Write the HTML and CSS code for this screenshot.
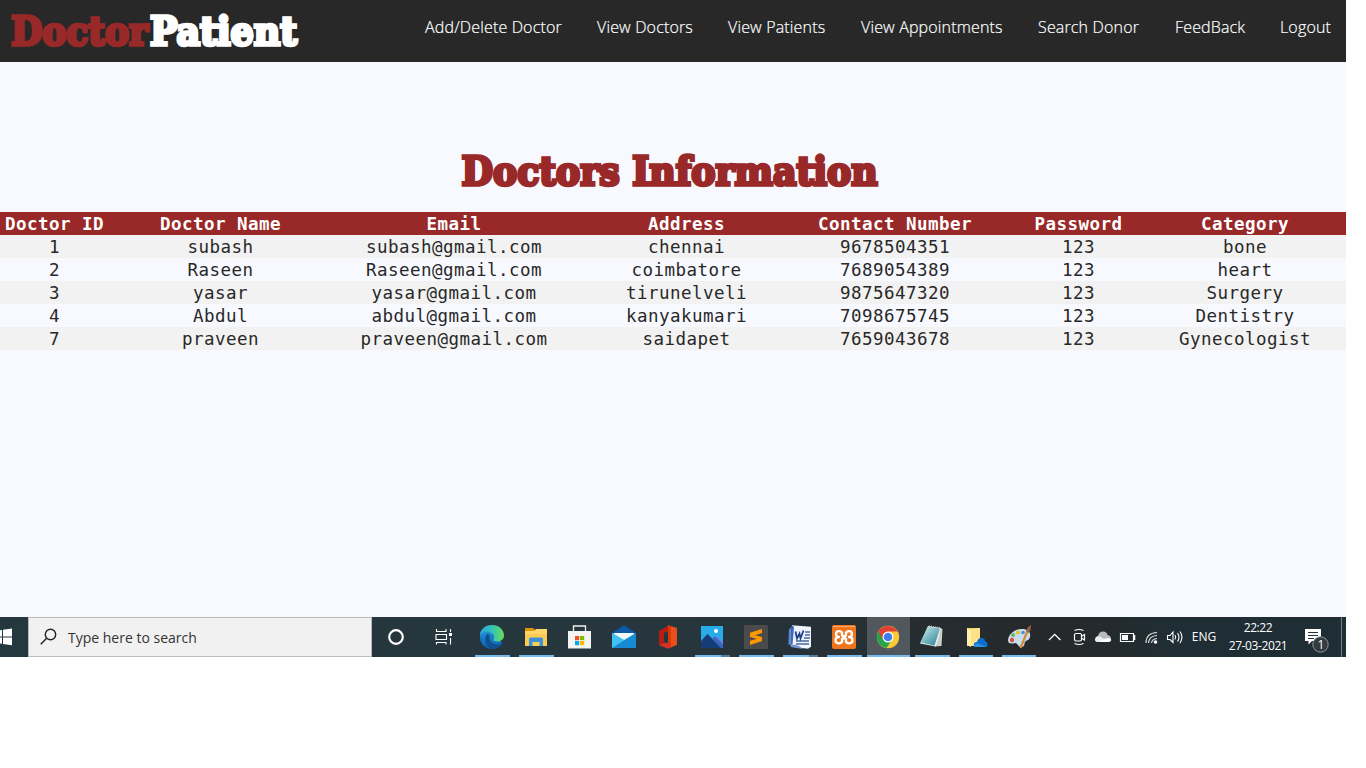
FILE: index.html
```html
<!DOCTYPE html>
<html lang="en">
<head>
<meta charset="utf-8">
<title>Doctors Information</title>
<link rel="stylesheet" href="styles.css">
</head>
<body>
<div class="screen">
  <header class="topbar">
    <svg class="brand" width="320" height="62" role="img" aria-label="DoctorPatient">
      <text class="slab red" x="11" y="44.500" textLength="137" lengthAdjust="spacingAndGlyphs">Doctor</text>
      <text class="slab white" x="150" y="44.500" textLength="147" lengthAdjust="spacingAndGlyphs">Patient</text>
    </svg>
    <nav class="nav">
      <a class="w1">Add/Delete Doctor</a><a class="w2">View Doctors</a><a class="w3">View Patients</a><a class="w4">View Appointments</a><a class="w5">Search Donor</a><a class="w6">FeedBack</a><a class="w7">Logout</a>
    </nav>
  </header>
  <main class="content">
    <h1 class="title">
      <svg width="480" height="60"><text class="slab red" x="4.500" y="38" textLength="416" lengthAdjust="spacingAndGlyphs">Doctors Information</text></svg>
    </h1>
    <table class="doctors">
      <colgroup><col class="c1"><col class="c2"><col class="c3"><col class="c4"><col class="c5"><col class="c6"><col class="c7"></colgroup>
      <thead><tr><th>Doctor ID</th><th>Doctor Name</th><th>Email</th><th>Address</th><th>Contact Number</th><th>Password</th><th>Category</th></tr></thead>
      <tbody>
        <tr><td>1</td><td>subash</td><td>subash@gmail.com</td><td>chennai</td><td>9678504351</td><td>123</td><td>bone</td></tr>
        <tr><td>2</td><td>Raseen</td><td>Raseen@gmail.com</td><td>coimbatore</td><td>7689054389</td><td>123</td><td>heart</td></tr>
        <tr><td>3</td><td>yasar</td><td>yasar@gmail.com</td><td>tirunelveli</td><td>9875647320</td><td>123</td><td>Surgery</td></tr>
        <tr><td>4</td><td>Abdul</td><td>abdul@gmail.com</td><td>kanyakumari</td><td>7098675745</td><td>123</td><td>Dentistry</td></tr>
        <tr><td>7</td><td>praveen</td><td>praveen@gmail.com</td><td>saidapet</td><td>7659043678</td><td>123</td><td>Gynecologist</td></tr>
      </tbody>
    </table>
  </main>
  <footer class="taskbar">
    <svg class="start" width="28" height="40"><g fill="#fff"><path d="M0 13.3L2 13v6.400H0zM3 12.800l9-1.200v7.800H3zM0 20.400h2v6.400l-2-.3zM3 20.400h9v7.900l-9-1.300z"/></g></svg>
    <div class="search">
      <svg width="39" height="38"><g fill="none" stroke="#222" stroke-width="1.400"><circle cx="21.500" cy="16.500" r="5.200"/><path d="M17.700 20.300l-6 6"/></g></svg>
      <span>Type here to search</span>
    </div>
    <svg class="wide" width="48" height="40"><circle cx="24" cy="20" r="6.800" fill="none" stroke="#fff" stroke-width="2.200"/></svg>
    <svg class="wide" width="50" height="40"><g fill="none" stroke="#fff" stroke-width="1.100"><path d="M16.500 12v2.500h9.500V12M16.500 27.500V25.500h9.500v2M16 17.500h10.500v5H16zM30.500 12v3M30.500 21v6.500"/></g><path d="M29 16h3v3h-3z" fill="#fff"/></svg>

    <div class="app open"><svg width="44" height="40">
      <defs><linearGradient id="eg" x1="0" x2="1"><stop offset="0" stop-color="#2ba6e0"/><stop offset=".5" stop-color="#35c1b9"/><stop offset="1" stop-color="#67dd58"/></linearGradient><linearGradient id="eb" x1="0" x2="0" y2="1" y1="0"><stop offset="0" stop-color="#239be0"/><stop offset="1" stop-color="#0b59a8"/></linearGradient></defs>
      <path d="M10 18C10 12 16 10 20 13l4 6 8.500 7C30 30 26 32 22 32c-7 0-12-5-12-12z" fill="url(#eb)"/>
      <path d="M10 18C11 11 16 8 22 8c7 0 12 5 12 10.500 0 4-3.500 6-7 6-3 0-4-1-3.500-2 1.500-2 .5-6-4-7.500-4-1-8 .5-9.500 3z" fill="url(#eg)"/>
      <path d="M17 17c-3 4-2 11 4 14.900C28 32 31 29 32.500 26c-4 3-9 2-11.500-1-2-2.500-2-5-1-7z" fill="#124f8f"/></svg></div>
    <div class="app open"><svg width="44" height="40">
      <path d="M11 11h8l2 2v4H11z" fill="#dc9704"/><path d="M11 14h9l2-2h11v17H11z" fill="#ffd668"/><path d="M11 17h22v12H11z" fill="#fdca52"/><path d="M15 29v-7q0-1.500 1.500-1.500h11q1.500 0 1.500 1.500v7h-3.500v-4h-7v4z" fill="#3c92d4"/></svg></div>
    <div class="app"><svg width="44" height="40">
      <path d="M15.500 15V9h12v6" fill="none" stroke="#f1f1f1" stroke-width="1.300"/><path d="M10 14h23v17.500H10z" fill="#f4f4f4"/><path d="M17 19h4.200v4.200H17z" fill="#f25022"/><path d="M22 19h4.200v4.200H22z" fill="#7fba00"/><path d="M17 24h4.200v4.200H17z" fill="#00a4ef"/><path d="M22 24h4.200v4.200H22z" fill="#ffb900"/></svg></div>
    <div class="app"><svg width="44" height="40">
      <path d="M10 16l12-7.700L34 16v6H10z" fill="#0a5aa8"/><path d="M12 16h20v2l-10 6-10-6z" fill="#f7f9fb"/><path d="M10 16l12 7 12-7v15H10z" fill="#31b1ef"/><path d="M10 31l24-15v15z" fill="#168bd4"/><path d="M10 16l12 7-12 8z" fill="#40c3f2"/></svg></div>
    <div class="app"><svg width="44" height="40">
      <path d="M13 14l10-5.700v5.700l-5 2v9l-5 3z" fill="#b71d14"/><path d="M22 8.300l9 2.700v17l-9 3.500-9-3.500 11-1V13l-2-1z" fill="#e8501b"/><path d="M22 8.300l3 1V28l-3-1V13z" fill="#d83b01"/><path d="M13 28l5-2.500 7 1v4l-3 1z" fill="#d92f23"/></svg></div>
    <div class="app open multi"><svg width="44" height="40">
      <path d="M11 9h22v22H11z" fill="#26ace9"/><path d="M20 24l6-5 7 5v7H20z" fill="#6e7de0"/><path d="M11 24l6.500-7L32 31H11z" fill="#153c76"/><path d="M22 22l3-2.500 8 8V31h-2z" fill="#3765c4"/><circle cx="26" cy="14" r="2" fill="#fff"/></svg></div>
    <div class="app open"><svg width="44" height="40">
      <rect x="10" y="8" width="24" height="24" rx="1.500" fill="#4b4b4b"/><path d="M16 15.700L28 12v4l-7 2.200 7 1.700v4L16 28v-4.200l7-2.100-7-1.700z" fill="#ff9800"/></svg></div>
    <div class="app open multi"><svg width="44" height="40">
      <path d="M14 8.300l19 1.500v20l-3 2-17-2z" fill="#f0f4fb"/><path d="M11 12l4-3.500 1 2-1.500 17-4.500.5z" fill="#3d68b5"/><path d="M12 12v15" stroke="#8bacdf"/><path d="M27 15h5M27 18h5M26 21h6M18 24h13M18 27h13" stroke="#4a65a5" stroke-width="1.300"/><path d="M16 14l10-1v9l-10 1z" fill="#e5edfa"/><path d="M17.500 14.500l1.500 7 2.500-5 1 5 3-8" fill="none" stroke="#193c84" stroke-width="1.700"/><path d="M12 28c5-1 9 0 13 4l-12-2z" fill="#6f96d6"/></svg></div>
    <div class="app open"><svg width="44" height="40">
      <rect x="10" y="8" width="24" height="24" rx="2" fill="#f0761d"/><path d="M11 9.500h22" stroke="#fba969"/><path d="M20.500 16.500C19 13 14 13.500 14 17c0 2 1.500 3 3 3-2 0-3.500 1.200-3.500 3.300 0 3.700 5.500 4 7 .7M23.500 16.500C25 13 30 13.500 30 17c0 2-1.500 3-3 3 2 0 3.500 1.200 3.500 3.300 0 3.700-5.500 4-7 .7M20 16v2.500q2 1.500 4 0V16M20 24.500V22q2-1.500 4 0v2.500" fill="none" stroke="#fff" stroke-width="2.300" stroke-linejoin="round"/></svg></div>
    <div class="app open active"><svg width="44" height="40">
      <circle cx="22" cy="20" r="11.200" fill="#fbc934"/><path d="M22 20L12.300 14.400A11.200 11.200 0 0 0 20.500 31.100L26.500 22z" fill="#27a34b"/><path d="M12.300 14.400A11.200 11.200 0 0 1 31.700 14.600H22l-5 8z" fill="#e23f35"/><circle cx="22" cy="20" r="5.500" fill="#fff"/><circle cx="22" cy="20" r="4.300" fill="#3f7de8"/></svg></div>
    <div class="app open"><svg width="44" height="40">
      <defs><linearGradient id="np" x1="0" y1="0" x2="1" y2="1"><stop offset="0" stop-color="#d3eff2"/><stop offset=".5" stop-color="#75b5c0"/><stop offset="1" stop-color="#327b8e"/></linearGradient></defs>
      <path d="M30 11l2.500 1-1 17-7 .5z" fill="#c9cfcb"/><path d="M18 9l13 2-5 18.500-16-3z" fill="#e8f0ef"/><path d="M18 10l12 1.500-5.500 17L10.500 25.500z" fill="url(#np)"/><path d="M19 9l12 2" stroke="#b2bab9" stroke-width="1.500" stroke-dasharray="1 1"/></svg></div>
    <div class="app open narrow"><svg width="44" height="40">
      <path d="M13 11h13v18H13z" fill="#f6c94f"/><path d="M15 12l11-1v17l-9 1z" fill="#ffe18a"/><path d="M13 11l4 3v16l-4-2z" fill="#fff0aa"/><path d="M20 30q-1-5 3-5 1-4 4-4 4 0 4 3 3 1 2.500 4 0 2-2 2z" fill="#0a6dcf"/><path d="M20 30q0-3 3-4l10 4z" fill="#2791e6"/></svg></div>
    <div class="app open narrow last"><svg width="44" height="40">
      <path d="M10 23c1-7 7-11 14-11 6 0 9 3 8 8-1 4-4 3-5 5s0 5-4 5c-3 0-3-4-6-4-4 1-7 1-7-3z" fill="#c8ddeb"/><circle cx="15" cy="18" r="2" fill="#69b65e"/><circle cx="20" cy="15.500" r="2" fill="#e4bd37"/><circle cx="25" cy="15.500" r="1.800" fill="#4394d0"/><circle cx="14" cy="23" r="2.200" fill="#db4f3c"/><path d="M29.500 14l-7 17" stroke="#d78836" stroke-width="2.200"/><path d="M28 14l2-4 3-2-.5 5-2 3z" fill="#9b6042"/></svg></div>

    <svg class="tray" width="25" height="40"><path d="M7 23l5.700-5.700 5.700 5.700" fill="none" stroke="#fff" stroke-width="1.300"/></svg>
    <svg class="tray" width="24" height="40"><g fill="none" stroke="#fff" stroke-width="1.200"><rect x="7.500" y="16.500" width="7" height="7.500" rx="1.500"/><path d="M15 19l2.500-1.500v5.500L15 21.500M7.500 13.500q4.500-2 9 0M7.500 26.500q4.500 2 9 0"/></g></svg>
    <svg class="tray" width="24" height="40"><path d="M5 24q-2-4 2-5 1-4.500 5-4.500 4 0 4.500 3.500 3.500.5 3.500 4 0 2-2 2z" fill="#b9bcbe"/><path d="M6.500 25q-3-.5-2.500-3 1-3.500 5-2.500l9 5.500z" fill="#eee"/><path d="M8 25l8-4q5 0 4 3l-2 1z" fill="#fff"/></svg>
    <svg class="tray" width="24" height="40"><path d="M5.500 16.500h13v8h-13z" fill="none" stroke="#fff" stroke-width="1.200"/><path d="M7 18h6v5H7zM19 18h1.300v5H19z" fill="#fff"/></svg>
    <svg class="tray" width="24" height="40"><g fill="none" stroke="#ddd" stroke-width="1.100"><path d="M7 26Q7 16 18 15.500M9.500 26Q10 19 18 18.500M12.500 26Q13 22 18 21.500"/></g><circle cx="16.500" cy="25" r="1.800" fill="#fff"/></svg>
    <svg class="tray" width="24" height="40"><g fill="none" stroke="#fff" stroke-width="1.100"><path d="M4.500 18.500H7l3-3.500v10.500L7 22.500H4.500zM12 18q1.500 2.200 0 4.500M14.500 16q3 4.200 0 8.500M17 14.500q4 5.700 0 11.500"/></g></svg>
    <span class="lang">ENG</span>
    <div class="clock"><span>22:22</span><span class="date">27-03-2021</span></div>
    <svg class="notice" width="46" height="40"><path d="M10 12h16v12h-9l-3.500 3.500V24H10z" fill="#fff"/><path d="M13 15.500h10M13 18.500h10M13 21.500h6" stroke="#26333a"/><circle cx="25.500" cy="27.500" r="7.700" fill="#333b40" stroke="#939799"/><text x="22.500" y="32" class="count">1</text></svg>
    <i class="edge"></i>
  </footer>
</div>
</body>
</html>
```
FILE: styles.css
```css
* { box-sizing: border-box; }
body { margin: 0; background: #fff; font-family: "Open Sans", "Noto Sans", sans-serif; }
.screen { width: 1346px; height: 657px; display: flex; flex-direction: column; background: #f8f9ff; overflow: hidden; }
.topbar { height: 62px; flex: none; display: flex; justify-content: space-between; background: #282828; }
.brand { display: block; overflow: visible; }
.slab { font-family: "DejaVu Serif", serif; font-weight: 700; font-size: 38.5px; stroke-width: 3.4px; stroke-linejoin: miter; stroke-miterlimit: 2; }
.red { fill: #992828; stroke: #992828; }
.white { fill: #fff; stroke: #fff; }
.nav { display: flex; gap: 35px; padding: 15px 15px 0 0; font-weight: 300; font-size: 16px; line-height: 24px; letter-spacing: .16px; color: #fff; -webkit-text-stroke: .2px #fff; }
.nav a { white-space: nowrap; }
.w1 { width: 137px; } .w2 { width: 96px; } .w3 { width: 98px; } .w4 { width: 142px; } .w5 { width: 102px; } .w6 { width: 70px; } .w7 { width: 51px; }
.content { flex: 1; padding-top: 85px; }
.title { margin: 0 0 5px; padding-left: 457px; height: 60px; line-height: 0; }
.title svg { overflow: visible; }
.doctors { width: 1346px; table-layout: fixed; border-collapse: collapse; font-family: "DejaVu Sans Mono", monospace; font-size: 17.5px; letter-spacing: .465px; line-height: 21px; color: #282828; }
.doctors th, .doctors td { padding: 2px 0 0; height: 23px; text-align: center; white-space: nowrap; }
.doctors thead tr { background: #992828; color: #fff; }
.doctors tbody tr:nth-child(odd) { background: #f2f2f2; }
.doctors th:last-child, .doctors td:last-child { padding-right: 20px; }
.c1 { width: 109px; } .c2 { width: 223px; } .c3 { width: 244px; } .c4 { width: 221px; } .c5 { width: 196px; } .c6 { width: 171px; } .c7 { width: 182px; }
.taskbar { height: 40px; flex: none; display: flex; background: linear-gradient(90deg, #25373f 0, #27363d 50%, #25292c 76%, #25292c 80%, #1f2e35 88%, #1f2e35 100%); color: #fff; }
.taskbar svg { display: block; flex: none; }
.search { width: 344px; height: 40px; display: flex; align-items: center; background: #f1f1f1; border: 1px solid #bbb; color: #333; font-size: 14px; }
.app { width: 44px; height: 40px; flex: none; display: grid; }
.app svg, .app::after { grid-area: 1 / 1; }
.open::after { content: ""; align-self: end; width: 35px; height: 2px; margin-left: 5px; background: #76b9ed; }
.multi::after { background: linear-gradient(90deg, #76b9ed 26px, #567d9b 26px); }
.narrow::after { width: 34px; }
.last::after { margin-left: 4px; }
.active { background: linear-gradient(90deg, transparent 1px, #50585e 1px); }
.active::after { width: 43px; margin-left: 1px; }
.lang { width: 34px; text-align: center; font-size: 12px; line-height: 39px; }
.clock { width: 74px; padding-top: 2px; display: flex; flex-direction: column; align-items: center; font-size: 12px; line-height: 18px; letter-spacing: -.4px; }
.date { letter-spacing: -.4px; }
.count { font-size: 12px; fill: #fff; }
.edge { width: 1px; height: 40px; background: #718087; }
```
